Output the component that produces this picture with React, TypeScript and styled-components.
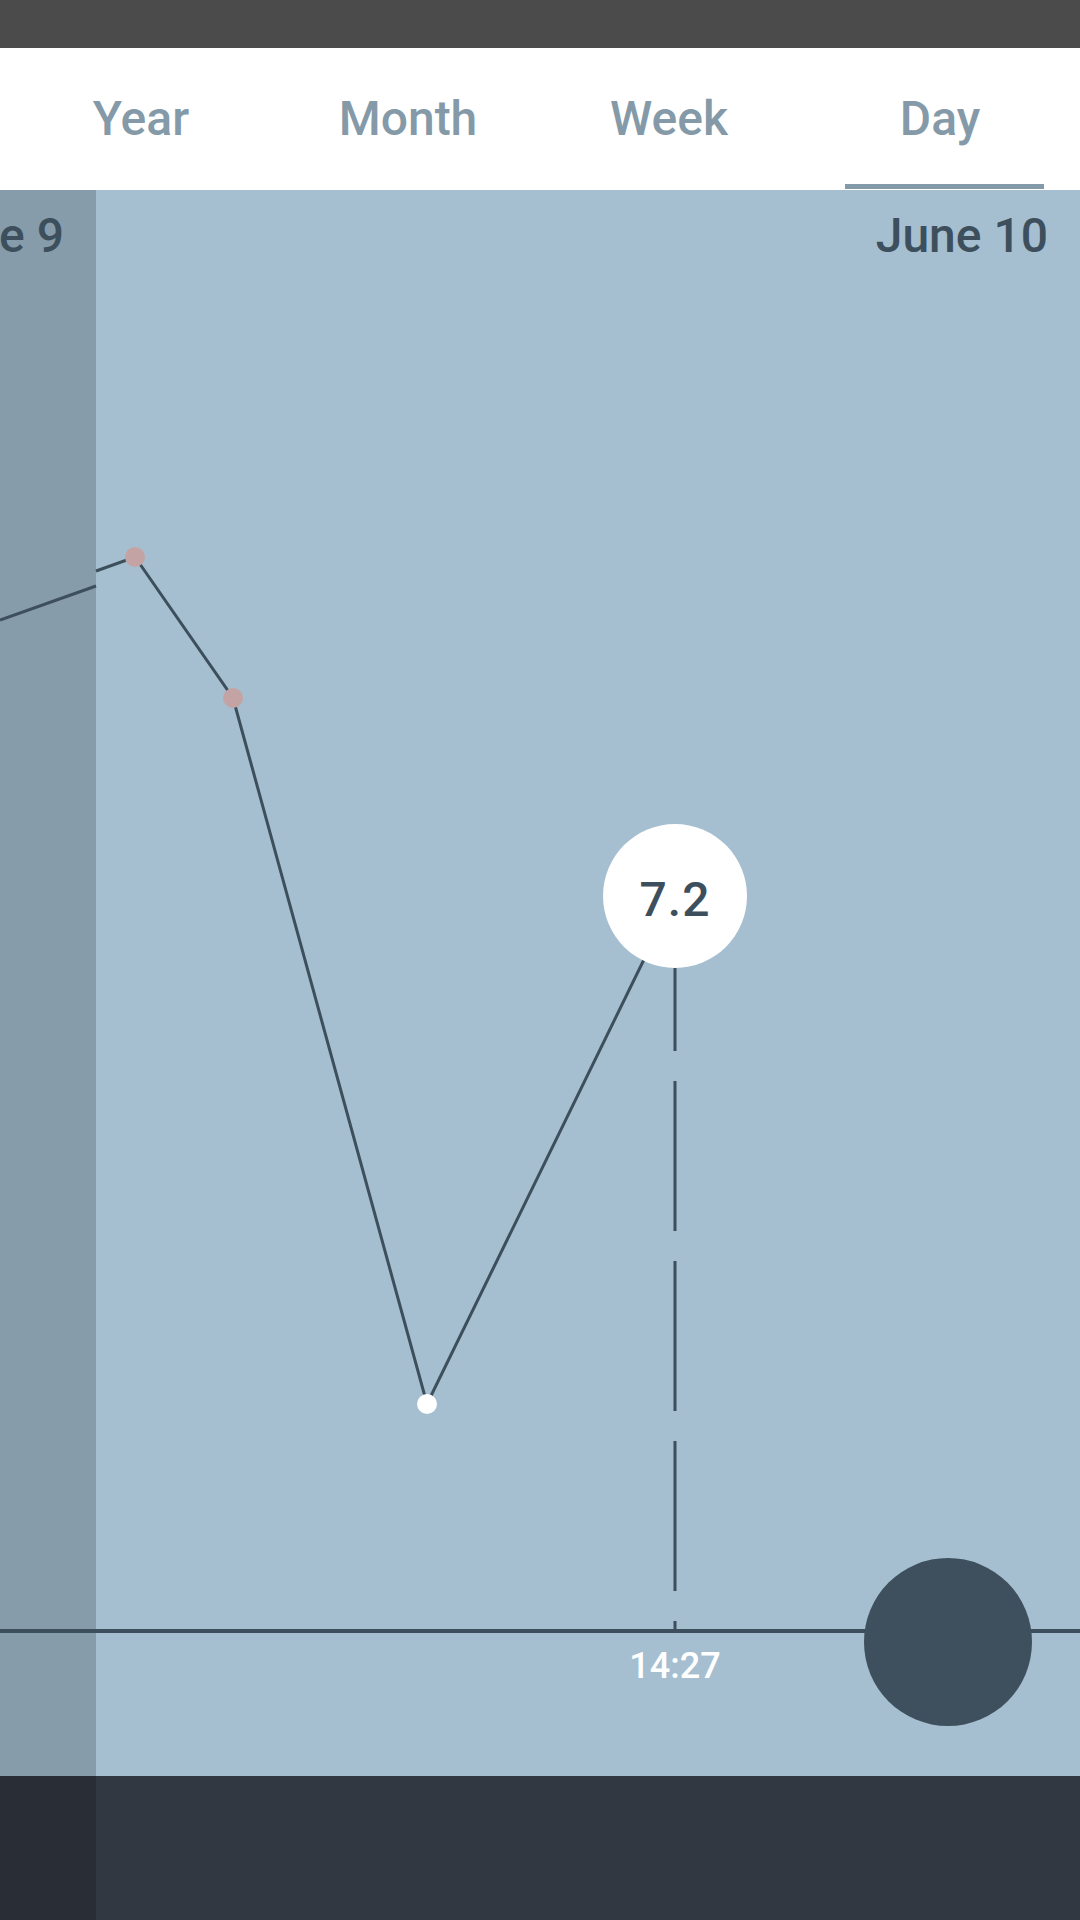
import styled, { createGlobalStyle } from "styled-components";

const GlobalStyle = createGlobalStyle`
  html, body {
    margin: 0;
    padding: 0;
  }
  body {
    font-family: Roboto, "Noto Sans", "Liberation Sans", sans-serif;
    background: #a5bfd0;
  }
`;

const Page = styled.div`
  width: 1080px;
  height: 1920px;
  display: flex;
  flex-direction: column;
  overflow: hidden;
`;

const StatusBar = styled.div`
  height: 48px;
  background: #4b4b4b;
  flex-shrink: 0;
`;

const TabBar = styled.nav`
  height: 142px;
  flex-shrink: 0;
  background: #ffffff;
  display: grid;
  grid-template-columns: 282px 252px 270px 272px 1fr;
`;

const Tab = styled.div<{ $active?: boolean }>`
  position: relative;
  display: flex;
  align-items: center;
  justify-content: center;
  font-size: 48px;
  line-height: 1;
  font-weight: 500;
  color: #859aa8;

  &::after {
    content: "";
    display: ${(p) => (p.$active ? "block" : "none")};
    position: absolute;
    left: 41px;
    right: 32px;
    bottom: 1px;
    height: 5px;
    background: #859aa8;
  }
`;

const Chart = styled.section`
  position: relative;
  flex: 1;
  display: grid;
  grid-template-columns: 96px 1fr;
  background: #a5bfd0;
`;

const DayPanel = styled.div<{ $past?: boolean }>`
  background: ${(p) => (p.$past ? "#869cab" : "transparent")};
  overflow: hidden;
  display: flex;
  justify-content: flex-end;
  align-items: flex-start;
  padding: 22px 32px 0 0;
`;

const DayLabel = styled.div`
  font-size: 48px;
  line-height: 1;
  font-weight: 500;
  color: #3d4f5c;
  white-space: nowrap;
`;

const Canvas = styled.svg`
  position: absolute;
  inset: 0;
  width: 100%;
  height: 100%;
  pointer-events: none;
`;

const ValueBubble = styled.div`
  position: absolute;
  left: 603px;
  top: 634px;
  width: 144px;
  height: 144px;
  box-sizing: border-box;
  padding-top: 6px;
  border-radius: 50%;
  background: #ffffff;
  display: flex;
  align-items: center;
  justify-content: center;
  font-size: 48px;
  font-weight: 500;
  letter-spacing: 1px;
  color: #3d4f5c;
`;

const TimeLabel = styled.div`
  position: absolute;
  left: 575px;
  width: 200px;
  top: 1458px;
  text-align: center;
  font-size: 36px;
  line-height: 1;
  font-weight: 500;
  color: #ffffff;
`;

const ActionButton = styled.button`
  position: absolute;
  left: 864px;
  top: 1368px;
  width: 168px;
  height: 168px;
  border: none;
  border-radius: 50%;
  background: #3e505d;
  padding: 0;
`;

const BottomBar = styled.footer`
  height: 144px;
  flex-shrink: 0;
  display: grid;
  grid-template-columns: 96px 1fr;
  background: #313842;
`;

const BottomShade = styled.div`
  background: #292d36;
`;

const INK = "#3d4f5c";
const BASELINE = 1441;
const BUBBLE = { x: 675, y: 706 };

const points = [
  { x: 96, y: 381 },
  { x: 135, y: 367, dot: "#c4a3a4" },
  { x: 233, y: 508, dot: "#c4a3a4" },
  { x: 427, y: 1214, dot: "#ffffff" },
  { x: BUBBLE.x, y: BUBBLE.y },
];

const tabs = ["Year", "Month", "Week", "Day"];

const App: React.FC = () => {
  const path = points.map((p) => `${p.x},${p.y}`).join(" ");
  return (
    <Page>
      <GlobalStyle />
      <StatusBar />
      <TabBar>
        {tabs.map((t) => (
          <Tab key={t} $active={t === "Day"}>
            {t}
          </Tab>
        ))}
      </TabBar>
      <Chart>
        <DayPanel $past>
          <DayLabel>June 9</DayLabel>
        </DayPanel>
        <DayPanel>
          <DayLabel>June 10</DayLabel>
        </DayPanel>

        <Canvas viewBox="0 0 1080 1586">
          <line x1={0} y1={BASELINE} x2={1080} y2={BASELINE} stroke={INK} strokeWidth={4} />
          {/* previous day, seen under the shade */}
          <line x1={0} y1={430} x2={96} y2={396} stroke={INK} strokeWidth={3} />
          <polyline points={path} fill="none" stroke={INK} strokeWidth={3} />
          <line
            x1={BUBBLE.x}
            y1={BUBBLE.y + 72}
            x2={BUBBLE.x}
            y2={BASELINE}
            stroke={INK}
            strokeWidth={3}
            strokeDasharray="150 30"
            strokeDashoffset={67}
          />
          {points
            .filter((p) => p.dot)
            .map((p) => (
              <circle key={p.x} cx={p.x} cy={p.y} r={10} fill={p.dot} />
            ))}
        </Canvas>

        <ValueBubble>7.2</ValueBubble>
        <TimeLabel>14:27</TimeLabel>
        <ActionButton aria-label="add" />
      </Chart>
      <BottomBar>
        <BottomShade />
        <div />
      </BottomBar>
    </Page>
  );
};

export default App;
